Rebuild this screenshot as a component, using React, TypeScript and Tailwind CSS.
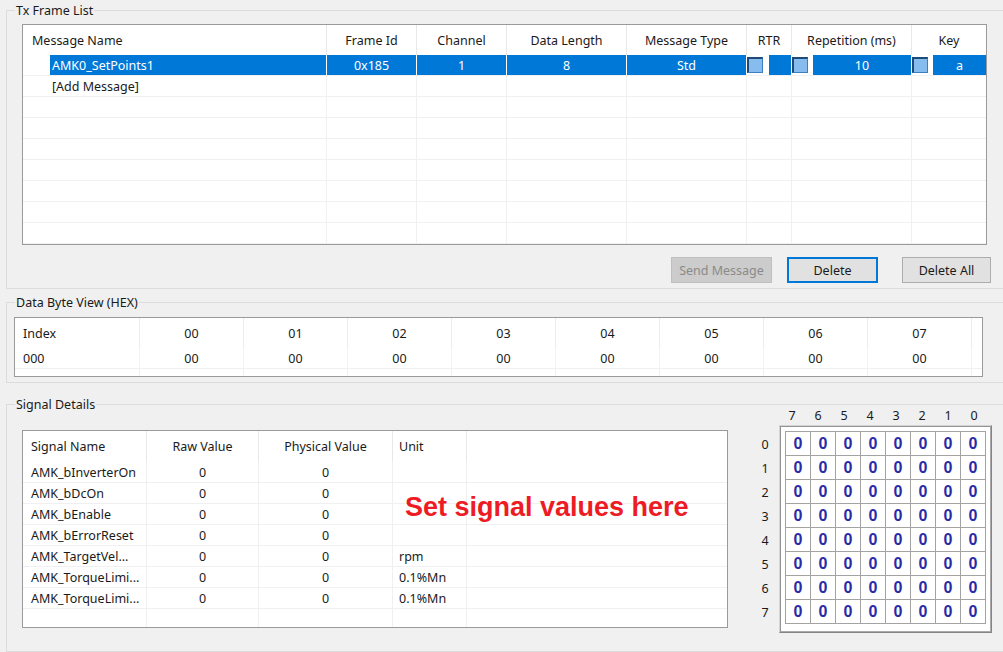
import React from 'react';

function Group({ title, className, children }: { title: string; className: string; children?: React.ReactNode }) {
  return (
    <div className={`border border-[#dcdcdc] ${className}`}>
      <div className="-mt-[8px] ml-[8px] w-fit bg-[#f0f0f0] px-[1px] leading-[14px] text-[#1a1a1a] pt-[1px]">{title}</div>
      {children}
    </div>
  );
}

function Check() {
  return (
    <div className="w-[16px] h-[16px] shrink-0 border-t-2 border-l-2 border-r border-b border-t-[#1d4a78] border-l-[#1d4a78] border-r-[#3d7fc0] border-b-[#3d7fc0] bg-[#86bdee]" />
  );
}

const txCols = [
  { label: 'Message Name', w: 'w-[303px]' },
  { label: 'Frame Id', w: 'w-[90px]' },
  { label: 'Channel', w: 'w-[90px]' },
  { label: 'Data Length', w: 'w-[120px]' },
  { label: 'Message Type', w: 'w-[120px]' },
  { label: 'RTR', w: 'w-[45px]' },
  { label: 'Repetition (ms)', w: 'w-[120px]' },
  { label: 'Key', w: 'w-[75px]' },
];

function EmptyTxRow({ name }: { name?: string }) {
  return (
    <div className="flex h-[21px] border-b border-[#f0f0f0]">
      {txCols.map((c, i) => (
        <div
          key={i}
          className={`${c.w} h-full flex items-center pt-[3px] ${i > 0 ? 'border-l border-[#f0f0f0]' : 'pl-[29px]'}`}
        >
          {i === 0 ? name : null}
        </div>
      ))}
    </div>
  );
}

function SelectedRow() {
  const cell = 'h-full bg-[#0078d7] flex items-center justify-center pt-[3px]';
  return (
    <div className="flex h-[21px] border-b border-[#f0f0f0] text-white">
      <div className="w-[303px] h-full pl-[27px]">
        <div className="h-full bg-[#0078d7] flex items-center pl-[2px] pt-[3px]">AMK0_SetPoints1</div>
      </div>
      <div className="w-[90px] h-full border-l border-white">
        <div className={cell}>0x185</div>
      </div>
      <div className="w-[90px] h-full border-l border-white">
        <div className={cell}>1</div>
      </div>
      <div className="w-[120px] h-full border-l border-white">
        <div className={cell}>8</div>
      </div>
      <div className="w-[120px] h-full border-l border-white">
        <div className={cell}>Std</div>
      </div>
      <div className="w-[45px] h-full border-l border-white flex items-center">
        <Check />
        <div className={`ml-[6px] flex-1 ${cell}`} />
      </div>
      <div className="w-[120px] h-full border-l border-white flex items-center">
        <Check />
        <div className={`ml-[5px] flex-1 ${cell}`}>10</div>
      </div>
      <div className="w-[75px] h-full border-l border-white flex items-center">
        <Check />
        <div className={`ml-[5px] flex-1 ${cell}`}>a</div>
      </div>
    </div>
  );
}

const byteCols = ['00', '01', '02', '03', '04', '05', '06', '07'];

const sigCols = [
  { label: 'Signal Name', w: 'w-[123px]', left: true },
  { label: 'Raw Value', w: 'w-[112px]', left: false },
  { label: 'Physical Value', w: 'w-[134px]', left: false },
  { label: 'Unit', w: 'w-[74px]', left: true },
];

const signals = [
  { name: 'AMK_bInverterOn', unit: '' },
  { name: 'AMK_bDcOn', unit: '' },
  { name: 'AMK_bEnable', unit: '' },
  { name: 'AMK_bErrorReset', unit: '' },
  { name: 'AMK_TargetVel...', unit: 'rpm' },
  { name: 'AMK_TorqueLimi...', unit: '0.1%Mn' },
  { name: 'AMK_TorqueLimi...', unit: '0.1%Mn' },
];

const bits = [7, 6, 5, 4, 3, 2, 1, 0];
const rowsIdx = [0, 1, 2, 3, 4, 5, 6, 7];

export default function App() {
  return (
    <div className="w-[1003px] h-[652px] overflow-hidden bg-[#f0f0f0] text-[12.5px] text-[#1a1a1a] font-['Noto_Sans',sans-serif]">
      <div className="pt-[10px] pl-[6px] w-[1030px]">
        {/* Tx Frame List */}
        <Group title="Tx Frame List" className="w-[1010px] h-[279px]">
          <div className="ml-[15px] mt-[6px] w-[965px] h-[221px] border border-[#9a9a9a] bg-white overflow-hidden">
            <div className="flex h-[30px]">
              {txCols.map((c, i) => (
                <div
                  key={i}
                  className={`${c.w} h-full flex items-center pt-[2px] ${i > 0 ? 'border-l border-[#e8e8e8] justify-center' : 'pl-[9px]'}`}
                >
                  {c.label}
                </div>
              ))}
            </div>
            <SelectedRow />
            <EmptyTxRow name="[Add Message]" />
            {[0, 1, 2, 3, 4, 5, 6].map((k) => (
              <EmptyTxRow key={k} />
            ))}
          </div>
          <div className="flex justify-end pr-[24px] mt-[12px] h-[26px]">
            <button className="w-[101px] h-full pt-[2px] bg-[#cccccc] border border-[#bfbfbf] text-[#8a8a8a]">Send Message</button>
            <button className="ml-[15px] w-[91px] h-full pt-[2px] bg-[#e1e1e1] border-2 border-[#0078d7]">Delete</button>
            <button className="ml-[24px] w-[89px] h-full pt-[2px] bg-[#e1e1e1] border border-[#adadad]">Delete All</button>
          </div>
        </Group>

        {/* Data Byte View */}
        <Group title="Data Byte View (HEX)" className="mt-[13px] w-[1010px] h-[81px]">
          <div className="ml-[7px] mt-[7px] w-[969px] h-[60px] border border-[#9a9a9a] bg-white overflow-hidden">
            <div className="flex h-[30px]">
              <div className="w-[124px] h-full flex items-center pl-[8px] pt-[3px]">Index</div>
              {byteCols.map((b) => (
                <div key={b} className="w-[104px] h-full flex items-center justify-center pt-[3px] border-l border-[#ececec]">
                  {b}
                </div>
              ))}
              <div className="flex-1 h-full border-l border-[#ececec]" />
            </div>
            <div className="flex h-[21px] border-b border-[#f0f0f0]">
              <div className="w-[124px] h-full flex items-center pl-[8px] pt-[3px]">000</div>
              {byteCols.map((b) => (
                <div key={b} className="w-[104px] h-full flex items-center justify-center pt-[3px] border-l border-[#f3f3f3]">
                  00
                </div>
              ))}
              <div className="flex-1 h-full border-l border-[#f3f3f3]" />
            </div>
            <div className="flex h-[7px]">
              <div className="w-[124px] h-full" />
              {byteCols.map((b) => (
                <div key={b} className="w-[104px] h-full border-l border-[#f0f0f0]" />
              ))}
              <div className="flex-1 h-full border-l border-[#f0f0f0]" />
            </div>
          </div>
        </Group>

        {/* Signal Details */}
        <Group title="Signal Details" className="mt-[21px] w-[1010px] h-[248px]">
          <div className="flex items-start">
            <div className="relative ml-[15px] mt-[18px] w-[706px] h-[198px] border border-[#9a9a9a] bg-white overflow-hidden">
              <div className="flex h-[31px]">
                {sigCols.map((c, i) => (
                  <div
                    key={i}
                    className={`${c.w} h-full flex items-center pt-[2px] ${i > 0 ? 'border-l border-[#e8e8e8]' : ''} ${c.left ? (i === 0 ? 'pl-[8px]' : 'pl-[6px]') : 'justify-center'}`}
                  >
                    {c.label}
                  </div>
                ))}
                <div className="flex-1 h-full border-l border-[#e8e8e8]" />
              </div>
              {signals.map((s, r) => (
                <div key={r} className="flex h-[21px] border-b border-[#f0f0f0]">
                  <div className="w-[123px] h-full flex items-center pl-[8px] pt-[3px] whitespace-nowrap">{s.name}</div>
                  <div className="w-[112px] h-full flex items-center justify-center pt-[3px] border-l border-[#f0f0f0]">0</div>
                  <div className="w-[134px] h-full flex items-center justify-center pt-[3px] border-l border-[#f0f0f0]">0</div>
                  <div className="w-[74px] h-full flex items-center pl-[6px] pt-[3px] border-l border-[#f0f0f0]">{s.unit}</div>
                  <div className="flex-1 h-full border-l border-[#f0f0f0]" />
                </div>
              ))}
              <div className="flex h-[18px]">
                <div className="w-[123px] h-full" />
                <div className="w-[112px] h-full border-l border-[#f0f0f0]" />
                <div className="w-[134px] h-full border-l border-[#f0f0f0]" />
                <div className="w-[74px] h-full border-l border-[#f0f0f0]" />
                <div className="flex-1 h-full border-l border-[#f0f0f0]" />
              </div>
              <div className="absolute left-[382px] top-[63px] text-[27px] leading-[27px] font-bold text-[#ed1c24] whitespace-nowrap font-['Liberation_Sans',Arial,sans-serif]">
                Set signal values here
              </div>
            </div>

            {/* Bit grid */}
            <div className="ml-[29px] -mt-[3px]">
              <div className="flex ml-[22px] h-[14px] leading-[14px]">
                {bits.map((b) => (
                  <div key={b} className="w-[26px] text-center">
                    {b}
                  </div>
                ))}
              </div>
              <div className="flex mt-[2px]">
                <div className="w-[16px] mr-[6px] pt-[8px] flex flex-col">
                  {rowsIdx.map((r) => (
                    <div key={r} className="h-[24px] flex items-center justify-center">
                      {r}
                    </div>
                  ))}
                </div>
                <div className="border border-t-[#d4d4d4] border-l-[#d4d4d4] border-r-[#858585] border-b-[#858585]">
                  <div className="border border-t-[#939393] border-l-[#939393] border-r-[#a9a9a9] border-b-[#a9a9a9] bg-white pt-[4px] pl-[4px] pr-[4px] pb-[7px]">
                    <div className="grid grid-cols-8 border-l border-t border-[#a3a3a3]">
                      {rowsIdx.map((r) =>
                        bits.map((b) => (
                          <div
                            key={`${r}-${b}`}
                            className="w-[25px] h-[24px] border-r border-b border-[#a3a3a3] flex items-center justify-center text-[16px] font-bold text-[#2a2aa8] font-['Liberation_Sans',Arial,sans-serif]"
                          >
                            0
                          </div>
                        ))
                      )}
                    </div>
                  </div>
                </div>
              </div>
            </div>
          </div>
        </Group>
      </div>
    </div>
  );
}
